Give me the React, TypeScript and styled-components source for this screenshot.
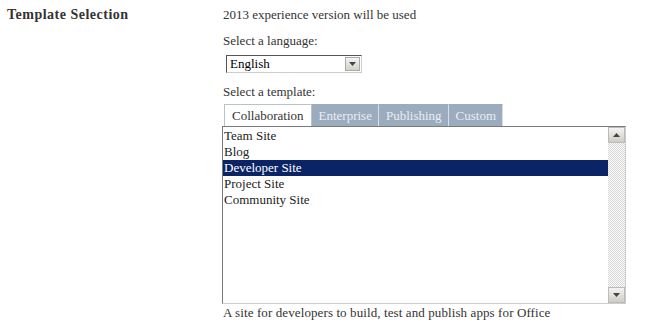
import React from 'react';
import styled, { createGlobalStyle } from 'styled-components';

const GlobalStyle = createGlobalStyle`
  body {
    margin: 0;
    background: #fff;
    font-family: "Liberation Serif", "Times New Roman", serif;
    color: #333;
  }
`;

const Page = styled.div`
  display: grid;
  grid-template-columns: 222px 1fr;
  padding-top: 7px;
`;

const Label = styled.div`
  padding-left: 7px;
  font-size: 14px;
  line-height: 15px;
  font-weight: 700;
  letter-spacing: 0.5px;
  color: #333;
`;

const Field = styled.div`
  display: flex;
  flex-direction: column;
  font-size: 13px;
`;

const Note = styled.div<{ $gap?: number }>`
  line-height: 15px;
  margin-left: 1px;
  margin-bottom: ${({ $gap }) => $gap ?? 0}px;
`;

const Select = styled.div`
  width: 136px;
  height: 18px;
  box-sizing: border-box;
  margin: 7px 0 11px 4px;
  border: 1px solid #555;
  border-right-color: #ccc;
  border-bottom-color: #ccc;
  display: flex;
  align-items: center;
  background: #fff;
  color: #000;
`;

const SelectValue = styled.span`
  flex: 1;
  padding-left: 3px;
`;

const SelectButton = styled.span`
  width: 15px;
  height: 14px;
  margin-right: 1px;
  background: linear-gradient(#f4f4f4, #d4d0c8);
  border: 1px solid #aaa;
  box-sizing: border-box;
  display: flex;
  align-items: center;
  justify-content: center;
`;

const Tabs = styled.div`
  display: flex;
  margin-left: 2px;
  margin-top: 5px;
`;

const Tab = styled.div<{ $active?: boolean }>`
  height: 22px;
  box-sizing: border-box;
  padding: 0 ${({ $active }) => ($active ? 7 : 6)}px;
  display: flex;
  align-items: center;
  background: ${({ $active }) => ($active ? '#fff' : '#9aacbd')};
  color: ${({ $active }) => ($active ? '#333' : '#e8eef4')};
  border: 1px solid ${({ $active }) => ($active ? '#b6c2cc' : '#9aacbd')};
  border-right-color: ${({ $active }) => ($active ? '#b6c2cc' : '#d6dee6')};
  border-bottom: none;
`;

const ListBox = styled.div`
  width: 404px;
  height: 178px;
  box-sizing: border-box;
  border: 1px solid #7a7a7a;
  border-right-color: #ccc;
  border-bottom-color: #ccc;
  display: flex;
  background: #fff;
`;

const Items = styled.div`
  flex: 1;
  padding-top: 1px;
`;

const Item = styled.div<{ $selected?: boolean }>`
  height: 16px;
  line-height: 16px;
  padding-left: 1px;
  color: ${({ $selected }) => ($selected ? '#fff' : '#222')};
  background: ${({ $selected }) => ($selected ? '#0a2466' : 'transparent')};
`;

const Scrollbar = styled.div`
  width: 17px;
  display: flex;
  flex-direction: column;
  justify-content: space-between;
  background-color: #f2f2f2;
  background-image: repeating-conic-gradient(#d8d8d8 0 25%, #fafafa 0 50%);
  background-size: 2px 2px;
`;

const ScrollButton = styled.div`
  height: 16px;
  background: linear-gradient(#f4f4f4, #d0ccc4);
  border: 1px solid #bbb;
  box-sizing: border-box;
  display: flex;
  align-items: center;
  justify-content: center;
`;

const Description = styled.div`
  margin-top: 1px;
  margin-left: 1px;
  line-height: 15px;
  letter-spacing: 0.1px;
`;

const Arrow = ({ up }: { up?: boolean }) => (
  <svg width="7" height="4" viewBox="0 0 7 4">
    <path d={up ? 'M0 4 L3.5 0 L7 4 Z' : 'M0 0 L7 0 L3.5 4 Z'} fill="#444" />
  </svg>
);

const templates = ['Team Site', 'Blog', 'Developer Site', 'Project Site', 'Community Site'];
const tabs = ['Collaboration', 'Enterprise', 'Publishing', 'Custom'];

export default function App() {
  return (
    <Page>
      <GlobalStyle />
      <Label>Template Selection</Label>
      <Field>
        <Note $gap={11}>2013 experience version will be used</Note>
        <Note>Select a language:</Note>
        <Select>
          <SelectValue>English</SelectValue>
          <SelectButton>
            <Arrow />
          </SelectButton>
        </Select>
        <Note>Select a template:</Note>
        <Tabs>
          {tabs.map((t, i) => (
            <Tab key={t} $active={i === 0}>
              {t}
            </Tab>
          ))}
        </Tabs>
        <ListBox>
          <Items>
            {templates.map((t) => (
              <Item key={t} $selected={t === 'Developer Site'}>
                {t}
              </Item>
            ))}
          </Items>
          <Scrollbar>
            <ScrollButton>
              <Arrow up />
            </ScrollButton>
            <ScrollButton>
              <Arrow />
            </ScrollButton>
          </Scrollbar>
        </ListBox>
        <Description>A site for developers to build, test and publish apps for Office</Description>
      </Field>
    </Page>
  );
}
